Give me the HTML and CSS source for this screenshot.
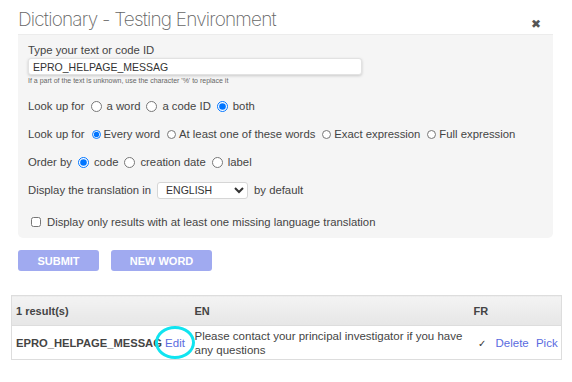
FILE: index.html
```html
<!DOCTYPE html>
<html lang="en">
<head>
    <meta charset="UTF-8">
    <title>Dictionary - Testing Environment</title>
    <link rel="stylesheet" href="styles.css">
</head>
<body>
    <div class="dialog">
        <div class="dialog-head">
            <h1>Dictionary - Testing Environment</h1>
            <span class="close">&#10006;</span>
        </div>

        <form class="search-panel">
            <label class="field-label">Type your text or code ID</label>
            <input class="search-input" type="text" value="EPRO_HELPAGE_MESSAG">
            <div class="hint">If a part of the text is unknown, use the character '%' to replace it</div>

            <div class="row">
                <span>Look up for</span>
                <label><input type="radio" name="kind"> a word</label>
                <label><input type="radio" name="kind"> a code ID</label>
                <label><input type="radio" name="kind" checked> both</label>
            </div>

            <div class="row small-radios">
                <span>Look up for</span>
                <label><input type="radio" name="match" checked>Every word</label>
                <label><input type="radio" name="match">At least one of these words</label>
                <label><input type="radio" name="match">Exact expression</label>
                <label><input type="radio" name="match">Full expression</label>
            </div>

            <div class="row">
                <span>Order by</span>
                <label><input type="radio" name="order" checked> code</label>
                <label><input type="radio" name="order"> creation date</label>
                <label><input type="radio" name="order"> label</label>
            </div>

            <div class="row">
                <span>Display the translation in</span>
                <select class="lang-select">
                    <option>ENGLISH</option>
                </select>
                <span>by default</span>
            </div>

            <div class="row check-row">
                <label><input type="checkbox"> Display only results with at least one missing language translation</label>
            </div>
        </form>

        <div class="actions">
            <button class="btn btn-submit">SUBMIT</button>
            <button class="btn btn-new">NEW WORD</button>
        </div>
    </div>

    <table class="results">
        <colgroup>
            <col class="col-code">
            <col class="col-en">
            <col class="col-fr">
        </colgroup>
        <thead>
            <tr>
                <th>1 result(s)</th>
                <th class="en-head">EN</th>
                <th>FR</th>
            </tr>
        </thead>
        <tbody>
            <tr>
                <td class="code-cell">
                    <b>EPRO_HELPAGE_MESSAG</b> <a href="#" class="link">Edit</a>
                    <span class="highlight"></span>
                </td>
                <td class="text-cell">Please contact your principal investigator if you have any questions</td>
                <td class="fr-cell"><span class="tick">&#10003;</span><a href="#" class="link">Delete</a> <a href="#" class="link pick">Pick</a></td>
            </tr>
        </tbody>
    </table>
</body>
</html>
```

FILE: styles.css
```css
body {
    margin: 0;
    font-family: "Liberation Sans", Arial, sans-serif;
    color: #444;
    background: #fff;
}

.dialog {
    padding: 0 19px 0 18px;
}

.dialog-head {
    display: flex;
    justify-content: space-between;
    align-items: flex-end;
    height: 34px;
    border-bottom: 1px solid #ececec;
}

.dialog-head h1 {
    margin: 0 0 1px 0;
    font-family: Inter, sans-serif;
    font-weight: 200;
    font-size: 19px;
    letter-spacing: -0.8px;
    color: #666;
    line-height: 26px;
}

.close {
    font-size: 12px;
    color: #555;
    margin: 0 12px 3px 0;
}

.search-panel {
    background: #f5f5f5;
    border-radius: 0 0 5px 5px;
    padding: 8px 10px 2px 10px;
    font-size: 11.3px;
}

.field-label {
    display: block;
    line-height: 15px;
}

.search-input {
    display: block;
    box-sizing: border-box;
    width: 334px;
    height: 17px;
    margin: 0;
    padding: 0 4px;
    border: 1px solid #e2e2e2;
    border-radius: 3px;
    box-shadow: 0 1px 3px rgba(0, 0, 0, 0.18);
    font-family: "Liberation Sans", Arial, sans-serif;
    font-size: 10.5px;
    color: #333;
    background: #fff;
}

.hint {
    font-size: 7px;
    line-height: 9px;
    color: #666;
    margin-top: 1px;
    margin-bottom: 7px;
}

.row {
    display: flex;
    align-items: center;
    gap: 6px;
    height: 28px;
    white-space: nowrap;
}

.row label {
    display: flex;
    align-items: center;
}

.row input[type=radio] {
    width: 11px;
    height: 11px;
    margin: 0 5px 0 0;
}

.small-radios {
    gap: 7px;
}

.small-radios input[type=radio] {
    width: 9px;
    height: 9px;
    margin: 0 3px 0 0;
}

.lang-select {
    width: 91px;
    height: 17px;
    font-family: "Liberation Sans", Arial, sans-serif;
    font-size: 10.5px;
    color: #333;
    padding: 0 4px;
    border: 1px solid #d6d6d6;
    border-radius: 3px;
    background: #fff;
}

.check-row {
    margin-top: 4px;
    padding-left: 3px;
}

.check-row input {
    width: 10px;
    height: 10px;
    margin: 0 6px 0 0;
}

.actions {
    display: flex;
    gap: 12px;
    margin-top: 12px;
}

.btn {
    height: 21px;
    padding: 0;
    background: #a0aaf0;
    color: #fff;
    border: none;
    border-radius: 3px;
    font-family: "Liberation Sans", Arial, sans-serif;
    font-weight: bold;
    font-size: 11px;
}

.btn-submit {
    width: 81px;
}

.btn-new {
    width: 101px;
}

.results {
    margin: 24px 0 0 11px;
    width: 551px;
    table-layout: fixed;
    border-collapse: collapse;
    border: 1px solid #ddd;
    font-size: 11.5px;
    color: #444;
}

.col-code {
    width: 183px;
}

.col-fr {
    width: 92px;
}

.results th {
    height: 29px;
    text-align: left;
    font-size: 11px;
    background: linear-gradient(#f3f3f3, #e6e6e6);
    border-bottom: 1px solid #ddd;
    padding: 0 4px;
}

.results th.en-head {
    padding-left: 0;
}

.results td {
    height: 33px;
    padding: 0 4px;
    vertical-align: middle;
}

.code-cell {
    position: relative;
    white-space: nowrap;
    overflow: visible;
}

.code-cell b {
    font-size: 11.2px;
}

.text-cell {
    line-height: 14px;
    padding-left: 0 !important;
}

.link {
    color: #5a6be0;
    text-decoration: none;
}

.highlight {
    position: absolute;
    left: 143px;
    top: 0;
    width: 34px;
    height: 27px;
    border: 3px solid #10e4f0;
    border-radius: 50%;
}

.fr-cell {
    white-space: nowrap;
}

.tick {
    font-size: 10px;
    color: #333;
    margin: 0 10px 0 4px;
}

.pick {
    margin-left: 4px;
}
```
